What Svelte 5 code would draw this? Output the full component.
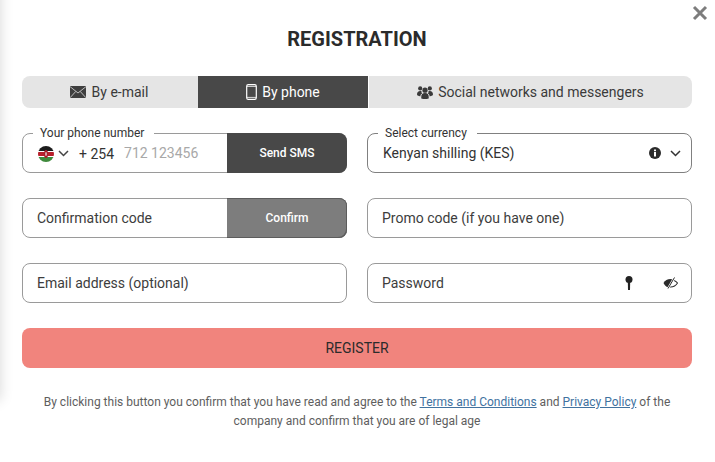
<script lang="ts">
	let mode = $state('phone');
	let phone = $state('');
	let code = $state('');
	let promo = $state('');
	let email = $state('');
	let password = $state('');
</script>

<div class="modal">
	<button class="close" type="button" aria-label="Close">
		<svg width="16" height="16" viewBox="0 0 16 16">
			<path d="M2 2l12 12M14 2L2 14" stroke="#7d7d7d" stroke-width="3" fill="none" />
		</svg>
	</button>

	<h1>REGISTRATION</h1>

	<div class="tabs">
		<button class="tab email" class:active={mode === 'email'} type="button" onclick={() => (mode = 'email')}>
			<svg width="16" height="12" viewBox="0 0 16 12">
				<rect width="16" height="12" fill="#3f3f3f" />
				<path d="M0 0.600L8 7l8-6.400M0 11.800l5.800-6.400M16 11.800l-5.800-6.400" fill="none" stroke="#c9c9c9" stroke-width="0.900" />
			</svg>
			By e-mail
		</button>
		<button class="tab phone" class:active={mode === 'phone'} type="button" onclick={() => (mode = 'phone')}>
			<svg width="11" height="16" viewBox="0 0 11 16">
				<rect x="0.7" y="0.7" width="9.6" height="14.6" rx="1.6" fill="none" stroke="currentColor" stroke-width="1.2" />
				<path d="M1 2.4h9M1 13.4h9" stroke="currentColor" stroke-width="0.8" />
			</svg>
			By phone
		</button>
		<button class="tab social" class:active={mode === 'social'} type="button" onclick={() => (mode = 'social')}>
			<svg width="16" height="13" viewBox="0 0 16 13" fill="currentColor">
				<circle cx="8" cy="4.2" r="2.6" />
				<circle cx="3.2" cy="2.4" r="2.100" />
				<circle cx="12.8" cy="2.400" r="2.100" />
				<path d="M4.300 12.400c-.4-3.600.9-5.400 3.700-5.400s4.100 1.800 3.700 5.400q-3.700 1-7.400 0z" />
				<path d="M0 8.600C0 6 1.200 4.900 3.200 4.900c.6 0 1 .1 1.400.4-.3 .9 0 1.700 .6 2.200C4 8 3.400 9 3.300 10.400 1.800 10.200 0 9.700 0 8.600z" />
				<path d="M16 8.600C16 6 14.800 4.900 12.800 4.900c-.6 0-1 .1-1.400.4.3 .9 0 1.700-.6 2.200 1.200 .5 1.800 1.500 1.900 2.900 1.500-.2 3.300-.7 3.300-1.800z" />
			</svg>
			Social networks and messengers
		</button>
	</div>

	<form class="grid" onsubmit={(e) => e.preventDefault()}>
		<div class="field joined">
			<span class="legend">Your phone number</span>
			<div class="prefix">
				<svg class="flag" width="16" height="16" viewBox="0 0 16 16">
					<defs>
						<clipPath id="flag-round"><circle cx="8" cy="8" r="8" /></clipPath>
					</defs>
					<g clip-path="url(#flag-round)">
						<rect width="16" height="5" fill="#1c1c1c" />
						<rect y="5" width="16" height="1" fill="#fff" />
						<rect y="6" width="16" height="4" fill="#b8202c" />
						<rect y="10" width="16" height="1" fill="#fff" />
						<rect y="11" width="16" height="5" fill="#3f8a3c" />
						<ellipse cx="8" cy="8" rx="2" ry="4" fill="#a91d28" />
						<ellipse cx="8" cy="8" rx="0.7" ry="2" fill="#f0f0f0" />
					</g>
				</svg>
				<svg class="chev" width="11" height="7" viewBox="0 0 11 7">
					<path d="M1 1l4.500 4.500L10 1" fill="none" stroke="#444" stroke-width="1.500" />
				</svg>
				<span class="dial">+ 254</span>
			</div>
			<input class="phone-input" type="text" placeholder="712 123456" bind:value={phone} />
			<button class="side dark" type="button">Send SMS</button>
		</div>

		<div class="field select">
			<span class="legend">Select currency</span>
			<span class="value">Kenyan shilling (KES)</span>
			<svg class="info" width="12" height="12" viewBox="0 0 12 12">
				<circle cx="6" cy="6" r="6" fill="#2b2b2b" />
				<rect x="5" y="5" width="2" height="4.500" fill="#fff" />
				<rect x="5" y="2.500" width="2" height="1.700" fill="#fff" />
			</svg>
			<svg class="chev" width="11" height="7" viewBox="0 0 11 7">
				<path d="M1 1l4.500 4.500L10 1" fill="none" stroke="#333" stroke-width="1.500" />
			</svg>
		</div>

		<div class="field joined">
			<input type="text" placeholder="Confirmation code" bind:value={code} />
			<button class="side grey" type="button">Confirm</button>
		</div>

		<div class="field">
			<input type="text" placeholder="Promo code (if you have one)" bind:value={promo} />
		</div>

		<div class="field">
			<input type="text" placeholder="Email address (optional)" bind:value={email} />
		</div>

		<div class="field">
			<input type="password" placeholder="Password" bind:value={password} />
			<svg class="key" width="8" height="14" viewBox="0 0 8 14">
				<circle cx="4" cy="3.500" r="3.500" fill="#222" />
				<path d="M2.800 5h2.400l-.2 9H3z" fill="#222" />
			</svg>
			<svg class="eye" width="15" height="12" viewBox="0 0 15 12">
				<path d="M0.500 6C2 3.500 4.500 2 7.500 2c1 0 1.800 .2 2.600 .5L5 10.500C3 9.700 1.500 8 0.500 6z" fill="#2b2b2b" />
				<path d="M11.200 3.400C12.600 4.100 13.700 5 14.500 6c-1.500 2.500-4 4-7 4l-.8-.1" fill="none" stroke="#2b2b2b" stroke-width="1.100" />
				<path d="M11.500 0.500L5 11.500" stroke="#fff" stroke-width="2.200" />
				<path d="M11.500 0.500L5 11.500" stroke="#2b2b2b" stroke-width="1" />
			</svg>
		</div>

		<button class="register" type="submit">REGISTER</button>
	</form>

	<p class="terms">
		<span class="line">By clicking this button you confirm that you have read and agree to the
		<a href="#terms">Terms and Conditions</a> and <a href="#privacy">Privacy Policy</a> of the</span>
		<span class="line">company and confirm that you are of legal age</span>
	</p>
</div>

<style>
	:global(body) {
		margin: 0;
		background: #fff;
	}

	.modal {
		position: relative;
		box-sizing: border-box;
		width: 715px;
		height: 462px;
		padding: 28px 23px 0 22px;
		overflow: hidden;
		font-family: Roboto, 'Liberation Sans', sans-serif;
		color: #333;
		background: #fff;
	}

	/* soft shadow of the panel next to this one */
	.modal::before {
		content: '';
		position: absolute;
		top: -20px;
		left: -20px;
		width: 20px;
		height: 420px;
		box-shadow: 0 0 14px rgba(0, 0, 0, 0.16);
	}

	.close {
		position: absolute;
		top: 5px;
		right: 7px;
		display: flex;
		padding: 0;
		border: none;
		background: none;
		cursor: pointer;
	}

	h1 {
		margin: 0 0 25px;
		font-size: 20px;
		line-height: 23px;
		font-weight: 700;
		text-align: center;
		color: #2b2b2b;
	}

	.tabs {
		display: grid;
		grid-template-columns: 176px 170px 1fr;
		height: 32px;
		margin-bottom: 25px;
		border-radius: 8px;
		overflow: hidden;
		background: #fff;
	}

	.tab {
		display: flex;
		align-items: center;
		justify-content: center;
		gap: 6px;
		padding: 0 0 1px;
		border: none;
		background: #e5e5e5;
		color: #3a3a3a;
		font: inherit;
		font-size: 14px;
		cursor: pointer;
	}

	.tab svg {
		flex: none;
		margin-top: 1px;
	}

	.tab.active {
		background: #484848;
		color: #fff;
	}

	.tab.email {
		padding-right: 2px;
	}

	.tab.phone {
		gap: 5px;
	}

	.tab.social {
		margin-left: 1px;
		gap: 5px;
	}

	.grid {
		display: grid;
		grid-template-columns: 325px 325px;
		column-gap: 20px;
		row-gap: 25px;
		margin: 0;
	}

	.field {
		position: relative;
		box-sizing: border-box;
		display: flex;
		align-items: center;
		height: 40px;
		border: 1px solid #9a9a9a;
		border-radius: 8px;
		background: #fff;
	}

	.field input {
		flex: 1;
		min-width: 0;
		height: 100%;
		padding: 0 0 0 14px;
		border: none;
		outline: none;
		background: transparent;
		font: inherit;
		font-size: 14px;
		color: #333;
	}

	.field input::placeholder {
		color: #3d3d3d;
		opacity: 1;
	}

	.legend {
		position: absolute;
		top: -8px;
		left: 10px;
		padding: 0 10px 0 7px;
		background: #fff;
		font-size: 12px;
		line-height: 14px;
		color: #333;
	}

	.prefix {
		display: flex;
		align-items: center;
		margin-left: 15px;
		padding-top: 1px;
	}

	.prefix .chev {
		margin-left: 4px;
	}

	.dial {
		margin-left: 10px;
		font-size: 14px;
		color: #333;
	}

	.field .phone-input {
		padding-left: 10px;
	}

	.field .phone-input::placeholder {
		color: #a8a8a8;
	}

	.side {
		width: 120px;
		height: 40px;
		margin: -1px -1px -1px 0;
		padding: 0;
		border: none;
		border-radius: 0 8px 8px 0;
		font: inherit;
		font-size: 12px;
		font-weight: 500;
		color: #fff;
		cursor: pointer;
	}

	.side.dark {
		background: #484848;
	}

	.side.grey {
		background: #7d7d7d;
		box-shadow: inset -1px -1px 0 #5c5c5c, inset 0 1px 0 #5c5c5c;
	}

	.select {
		padding: 0 10px 0 15px;
		border-color: #808080;
	}

	.value {
		flex: 1;
		font-size: 14px;
		color: #333;
	}

	.select .info {
		margin-right: 9px;
	}

	.key {
		margin-right: 30px;
	}

	.eye {
		margin-right: 13px;
	}

	.register {
		grid-column: 1 / -1;
		height: 40px;
		padding: 0;
		border: none;
		border-radius: 8px;
		background: #f1847d;
		color: #2b2b2b;
		font: inherit;
		font-size: 14px;
		cursor: pointer;
	}

	.terms {
		margin: 24px 0 0;
		padding: 1px 10px 0;
		font-size: 12px;
		line-height: 19px;
		text-align: center;
		color: #5e5e5e;
	}

	.line {
		display: block;
	}

	.terms a {
		color: #41729f;
		text-decoration: underline;
	}
</style>
